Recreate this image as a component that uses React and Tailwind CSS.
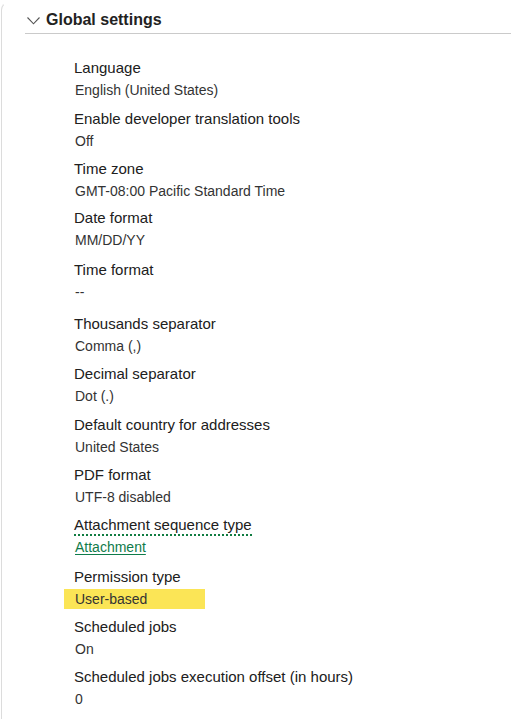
import React from "react";

const items = [
  { label: "Language", value: "English (United States)", h: "h-[51px]" },
  { label: "Enable developer translation tools", value: "Off", h: "h-[50px]" },
  { label: "Time zone", value: "GMT-08:00 Pacific Standard Time", h: "h-[49px]" },
  { label: "Date format", value: "MM/DD/YY", h: "h-[52px]" },
  { label: "Time format", value: "--", h: "h-[54px]" },
  { label: "Thousands separator", value: "Comma (,)", h: "h-[50px]" },
  { label: "Decimal separator", value: "Dot (.)", h: "h-[51px]" },
  { label: "Default country for addresses", value: "United States", h: "h-[50px]" },
  { label: "PDF format", value: "UTF-8 disabled", h: "h-[50px]" },
  { label: "Attachment sequence type", value: "Attachment", h: "h-[52px]", link: true },
  { label: "Permission type", value: "User-based", h: "h-[50px]", highlight: true },
  { label: "Scheduled jobs", value: "On", h: "h-[50px]" },
  { label: "Scheduled jobs execution offset (in hours)", value: "0", h: "h-[50px]" },
];

function Item({ item }) {
  return (
    <div className={`${item.h} flex flex-col`}>
      <div className="h-[20px] leading-[20px] text-[15px] text-[#202020]">
        {item.link ? (
          <span className="border-b-2 border-dotted border-[#107c41] pb-[1px]">{item.label}</span>
        ) : (
          item.label
        )}
      </div>
      <div className="mt-[2px] h-[20px] leading-[20px] text-[14px] text-[#333333]">
        {item.link ? (
          <span className="ml-[1px] text-[#0f7b4a] underline underline-offset-[2px] decoration-[1px]">{item.value}</span>
        ) : item.highlight ? (
          <div className="-ml-[10px] w-[141px] bg-[#fbe556] pl-[11px]">{item.value}</div>
        ) : (
          <span className="ml-[1px]">{item.value}</span>
        )}
      </div>
    </div>
  );
}

export default function App() {
  return (
    <div
      className="w-[511px] h-[719px] overflow-hidden bg-white"
      style={{ fontFamily: '"Liberation Sans", Arial, sans-serif' }}
    >
      <div className="ml-[1px] mt-[2px] h-[717px] border-l border-t border-l-[#dcdcdc] border-t-transparent rounded-tl-[8px]">
        <div className="ml-[23px] h-[31px] border-b border-[#cacaca] flex items-center">
          <svg width="13" height="8" viewBox="0 0 13 8" className="ml-[2px] mt-[6px]" fill="none">
            <path d="M0.5 0.5 L6.5 6.8 L12.5 0.5" stroke="#555" strokeWidth="1.1" />
          </svg>
          <span className="ml-[6px] text-[16px] font-bold text-[#222] leading-[20px] mt-[4px]">Global settings</span>
        </div>
        <div className="pl-[72px] pt-[24px]">
          {items.map((it) => (
            <Item key={it.label} item={it} />
          ))}
        </div>
      </div>
    </div>
  );
}
